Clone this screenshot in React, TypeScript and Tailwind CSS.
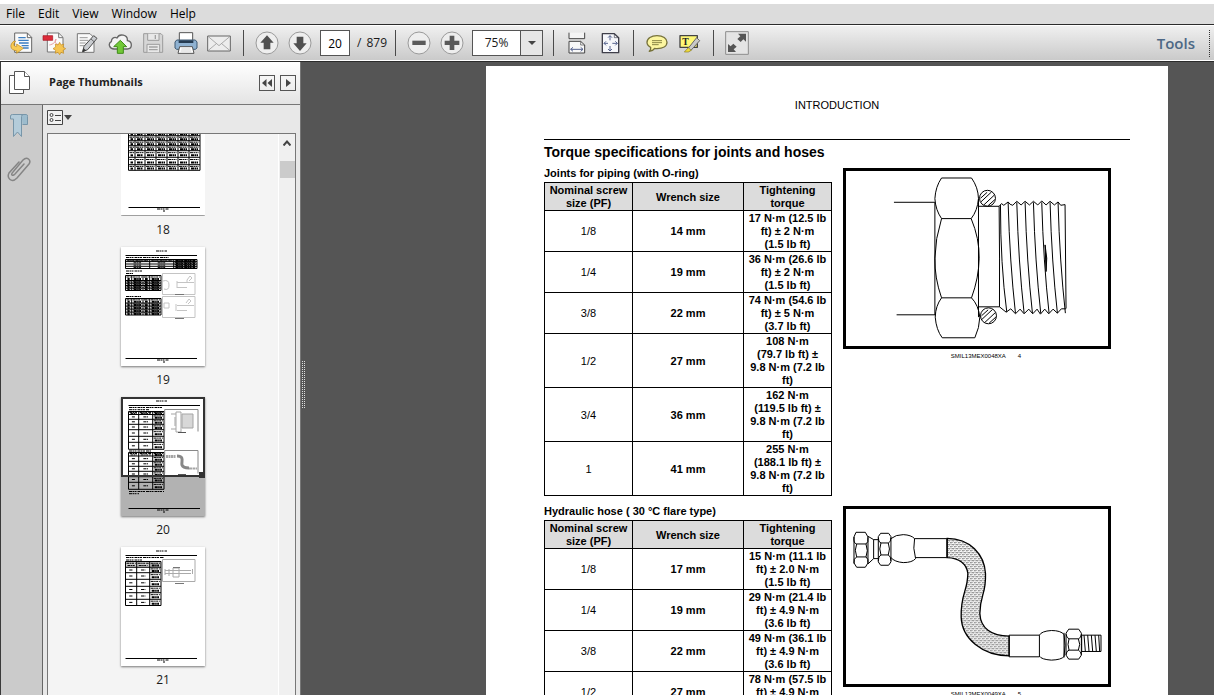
import type { ReactNode } from "react";

type SpecRow = { screw: string; wrench: string; torque: string };

const PIPING: SpecRow[] = [
  { screw: "1/8", wrench: "14 mm", torque: "17 N·m (12.5 lb\nft) ± 2 N·m\n(1.5 lb ft)" },
  { screw: "1/4", wrench: "19 mm", torque: "36 N·m (26.6 lb\nft) ± 2 N·m\n(1.5 lb ft)" },
  { screw: "3/8", wrench: "22 mm", torque: "74 N·m (54.6 lb\nft) ± 5 N·m\n(3.7 lb ft)" },
  { screw: "1/2", wrench: "27 mm", torque: "108 N·m\n(79.7 lb ft) ±\n9.8 N·m (7.2 lb\nft)" },
  { screw: "3/4", wrench: "36 mm", torque: "162 N·m\n(119.5 lb ft) ±\n9.8 N·m (7.2 lb\nft)" },
  { screw: "1", wrench: "41 mm", torque: "255 N·m\n(188.1 lb ft) ±\n9.8 N·m (7.2 lb\nft)" },
];

const HOSE: SpecRow[] = [
  { screw: "1/8", wrench: "17 mm", torque: "15 N·m (11.1 lb\nft) ± 2.0 N·m\n(1.5 lb ft)" },
  { screw: "1/4", wrench: "19 mm", torque: "29 N·m (21.4 lb\nft) ± 4.9 N·m\n(3.6 lb ft)" },
  { screw: "3/8", wrench: "22 mm", torque: "49 N·m (36.1 lb\nft) ± 4.9 N·m\n(3.6 lb ft)" },
  { screw: "1/2", wrench: "27 mm", torque: "78 N·m (57.5 lb\nft) ± 4.9 N·m\n(3.6 lb ft)" },
];

function ToolButton({ label, children }: { label: string; children: ReactNode }) {
  return (
    <button type="button" aria-label={label} className="flex h-8 w-[33px] shrink-0 items-center justify-center">
      <svg viewBox="0 0 72 72" width="24" height="24" fill="none" strokeLinejoin="round" aria-hidden="true">
        {children}
      </svg>
    </button>
  );
}

function Separator() {
  return <div className="mr-[6px] ml-[7px] h-[26px] w-px shrink-0 bg-[#4a4a4a]" />;
}

function RoundFace() {
  return <circle cx="36" cy="36" r="33" fill="#eeeeee" stroke="#9a9a9a" strokeWidth="3" />;
}

function Toolbar() {
  return (
    <div
      role="toolbar"
      className="flex h-[38px] shrink-0 items-center border-y border-[#2b2b2b] bg-linear-to-b from-[#f1f1f1] to-[#c9c9c9] pl-1 shadow-[inset_0_-1px_0_#ffffff,inset_0_1px_0_#ffffff]"
    >
      <ToolButton label="Export file">
        <path d="M17 6h38l13 13v45H17z" fill="#fafafa" stroke="#666" strokeWidth="3" />
        <path d="M55 6v14h13" stroke="#666" strokeWidth="3" />
        <path d="M28 20h22M28 28h31M30 36h29M38 44h21M42 51h17" stroke="#3b7ec2" strokeWidth="4" />
        <path d="M15 30c-14 10-13 28 8 29v8l20-15-20-13v8c-10 0-11-10-3-16z" fill="#f8cb55" stroke="#b98619" strokeWidth="2" />
      </ToolButton>
      <ToolButton label="Create PDF">
        <path d="M16 6h34l13 13v44H16z" fill="#fafafa" stroke="#777" strokeWidth="3" />
        <path d="M50 6v14h13" stroke="#777" strokeWidth="3" />
        <path d="M22 42c12-2 20-10 20-18-6 8 0 16 10 18" stroke="#e8a0a4" strokeWidth="3" />
        <rect x="3" y="14" width="29" height="14" fill="#dc2b3a" stroke="#a31521" strokeWidth="2" />
        <path d="m53 34 4 8 8-3-2 9 8 5-8 5 2 9-8-3-4 7-5-7-8 3 1-9-8-5 8-5-1-9 8 3z" fill="#f5c451" stroke="#c28b1e" strokeWidth="2" />
      </ToolButton>
      <ToolButton label="Edit text">
        <path d="M7 8h38l12 12v44H7z" fill="#fafafa" stroke="#777" strokeWidth="3" />
        <path d="M14 20h24M14 28h26M14 36h18M14 44h14" stroke="#999" strokeWidth="3" />
        <path d="m56 14 10 8-28 34-15 6 4-16z" fill="#c9ccd0" stroke="#4c4c4c" strokeWidth="3" />
        <path d="m48 24 9 8M23 62l3-9 6 5z" fill="#333" stroke="#333" strokeWidth="2" />
      </ToolButton>
      <ToolButton label="Upload to cloud">
        <path d="M18 54C4 54-1 38 10 32c0-11 10-16 17-11 7-15 33-10 31 8 16 2 16 25 0 25z" fill="#f4f4f4" stroke="#666" strokeWidth="4" />
        <path d="M37 28 56 47H46v20H28V47H17z" fill="#71c837" stroke="#3f8b1a" strokeWidth="3" />
      </ToolButton>
      <ToolButton label="Save">
        <path d="M8 8h52l5 5v51H8z" fill="#d6d6d6" stroke="#9c9c9c" strokeWidth="3" />
        <path d="M20 8v20h34V8M18 64V40h38v24" fill="#e8e8e8" stroke="#9c9c9c" strokeWidth="3" />
        <path d="M43 12v12M24 48h26M24 56h26" stroke="#a2a2a2" strokeWidth="4" />
      </ToolButton>
      <ToolButton label="Print">
        <path d="M16 5h40v25H16z" fill="#fff" stroke="#555" strokeWidth="3" />
        <path d="M8 27h56l5 6v18l-5 4H8l-5-4V33z" fill="#8fb2d2" stroke="#3c5873" strokeWidth="3" />
        <path d="M14 28h44v8H14z" fill="#263c52" />
        <path d="M17 47h38l5 20H12z" fill="#fff" stroke="#555" strokeWidth="3" />
        <path d="M22 54h28M20 60h32" stroke="#bbb" strokeWidth="2" />
      </ToolButton>
      <ToolButton label="Send by email">
        <path d="M2 15h68v45H2z" fill="#ededed" stroke="#666" strokeWidth="3" />
        <path d="m4 17 32 27 32-27M4 58l24-20M68 58 44 38" stroke="#8a8a8a" strokeWidth="2" />
      </ToolButton>
      <div className="w-px" />
      <Separator />
      <ToolButton label="Previous page">
        <RoundFace />
        <path d="m36 13 20 22H46v20H26V35H16z" fill="#505050" />
      </ToolButton>
      <ToolButton label="Next page">
        <RoundFace />
        <path d="m36 60 20-23H46V17H26v20H16z" fill="#505050" />
      </ToolButton>
      <input
        type="text"
        aria-label="Page number"
        defaultValue="20"
        className="ml-1 h-[26px] w-[30px] shrink-0 border border-[#555] bg-white text-center text-xs text-black"
      />
      <span className="ml-[7px] flex w-[31px] shrink-0 gap-[5px] text-xs">
        <span>/</span>
        <span>879</span>
      </span>
      <Separator />
      <ToolButton label="Zoom out">
        <RoundFace />
        <path d="M16 29h40v13H16z" fill="#5a5a5a" />
      </ToolButton>
      <ToolButton label="Zoom in">
        <RoundFace />
        <path d="M29 14h14v15h15v13H43v15H29V42H14V29h15z" fill="#5a5a5a" />
      </ToolButton>
      <div className="mr-[3px] ml-1 flex h-[26px] w-[71px] shrink-0 items-stretch border border-[#555] bg-white">
        <select aria-label="Zoom" defaultValue="75%" className="w-12 appearance-none border-r border-[#555] text-center text-xs">
          <option>50%</option>
          <option>75%</option>
          <option>100%</option>
        </select>
        <span className="flex flex-1 items-center justify-center bg-[#e6e6e6]">
          <svg viewBox="0 0 8 4" width="8" height="4" aria-hidden="true">
            <path d="M0 0h8L4 4z" fill="#444" />
          </svg>
        </span>
      </div>
      <Separator />
      <ToolButton label="Fit width">
        <path d="M12 5v18h47V5" fill="#f4f4f4" stroke="#444" strokeWidth="3" />
        <path d="M12 66V31h35l12 11v24z" fill="#f8f8f8" stroke="#444" strokeWidth="3" />
        <path d="M47 31v11h12" stroke="#444" strokeWidth="2" />
        <path d="M17 55h37m-30-6-7 6 7 6m23-12 7 6-7 6" stroke="#56638f" strokeWidth="3" />
      </ToolButton>
      <ToolButton label="Fit page">
        <path d="M13 8h36l13 12v45H13z" fill="#f6f7fb" stroke="#3f3f4a" strokeWidth="4" />
        <path d="M49 8v12h13" stroke="#3f3f4a" strokeWidth="2" />
        <path d="M36 14v14M36 60V45M18 37h12M58 37H43m-7-23-6 6m6-6 6 6M36 60l-6-6m6 6 6-6M18 37l6-6m-6 6 6 6M58 37l-6-6m6 6-6 6" stroke="#56638f" strokeWidth="3" />
      </ToolButton>
      <Separator />
      <ToolButton label="Add comment">
        <path d="M36 14c18 0 30 8 30 20S53 53 36 53c-3 0-5 0-7-1-3 5-9 8-16 9 4-4 5-8 4-12C10 46 6 40 6 34c0-12 13-20 30-20z" fill="#fcf6a0" stroke="#77733c" strokeWidth="4" />
        <path d="M21 29h30M21 35h30M21 41h20" stroke="#8a8543" strokeWidth="3" />
      </ToolButton>
      <ToolButton label="Highlight text">
        <path d="M6 14h52v35H6z" fill="#fff876" stroke="#444" strokeWidth="4" />
        <text x="13" y="41" fontSize="29" fontWeight="bold" fontFamily="Liberation Serif, serif" fill="#222">
          T
        </text>
        <path d="m56 20 9 9-26 29-11 3 4-11z" fill="#c9c9c9" stroke="#666" strokeWidth="3" />
        <path d="m31 50 9 8-9 5H19z" fill="#f0dc3c" stroke="#8a7b22" strokeWidth="2" />
      </ToolButton>
      <Separator />
      <ToolButton label="Read mode">
        <path d="M2 2h68v68H2z" fill="#e4e4e4" stroke="#8d8d8d" strokeWidth="3" />
        <path d="M63 8v24l-8-7-8 8-10-9 9-8-7-8zM9 63V39l8 7 8-8 10 9-9 8 7 8z" fill="#555" />
      </ToolButton>
      <div className="flex-1" />
      <button type="button" className="mr-[14px] text-[15px] font-semibold text-[#4d6885]">
        Tools
      </button>
      <div className="mr-1 h-[27px] border-l border-dotted border-[#333]" />
    </div>
  );
}

/* Row of dark specks standing in for text on a miniature page */
function Specks({ x1, x2, y, heavy = false }: { x1: number; x2: number; y: number; heavy?: boolean }) {
  return (
    <line x1={x1} x2={x2} y1={y} y2={y} stroke="#000" strokeWidth={heavy ? 2 : 1} strokeDasharray="3 0.5 1.5 0.5 2 1" />
  );
}

function MiniTable({ cols, rows, dense = false }: { cols: number[]; rows: number[]; dense?: boolean }) {
  const left = cols[0];
  const right = cols[cols.length - 1];
  const bottom = rows[rows.length - 1];
  return (
    <g>
      {rows.map((y) => (
        <line key={`r${y}`} x1={left} x2={right} y1={y} y2={y} stroke="#000" />
      ))}
      {cols.map((x) => (
        <line key={`c${x}`} x1={x} x2={x} y1={rows[0]} y2={bottom} stroke="#000" />
      ))}
      {rows.slice(1).map((y, r) =>
        cols.slice(1).map((x, c) => {
          const height = y - rows[r];
          const width = x - cols[c];
          const mid = (y + rows[r]) / 2;
          const last = c === cols.length - 2;
          if (dense || last || r === 0) {
            return (
              <g key={`${x}-${y}`}>
                <Specks x1={cols[c] + 1} x2={x - 1} y={mid - height / 5} />
                <Specks x1={cols[c] + 2} x2={x - 2} y={mid + height / 5} heavy={dense || last} />
              </g>
            );
          }
          return <Specks key={`${x}-${y}`} x1={cols[c] + width / 3} x2={x - width / 3} y={mid} />;
        }),
      )}
    </g>
  );
}

function MiniFrame({ left, children }: { left: number; children: ReactNode }) {
  return (
    <svg viewBox="0 0 84 119" width="84" height="119" className="shrink-0 bg-white shadow-[0_1px_2px_#777]" aria-hidden="true">
      <Specks x1={35} x2={46} y={4} />
      <path d={`M${left} 8.5h71.5M${left} 111.5h71.5`} stroke="#000" />
      <Specks x1={36} x2={48} y={113} />
      <Specks x1={42} x2={44} y={115} />
      {children}
    </svg>
  );
}

function Thumb18() {
  return (
    <MiniFrame left={7.5}>
      <MiniTable dense cols={[7.5, 14, 24, 35, 46, 57, 68, 79]} rows={[30, 35, 39.7, 44.7, 49.7, 54.7, 61.3, 68.7, 74.3]} />
    </MiniFrame>
  );
}

function Thumb19() {
  return (
    <MiniFrame left={4.5}>
      <Specks x1={5} x2={48} y={10.5} />
      <MiniTable cols={[4.5, 28.7, 52.7, 76]} rows={[12.5, 14.6, 17, 19.3, 21.5]} />
      <Specks x1={5} x2={22} y={24} />
      <Specks x1={5} x2={12} y={26.5} />
      <MiniTable dense cols={[4.5, 10.7, 22, 28.7, 40]} rows={[28.5, 33.5, 36, 38.5, 41, 43.5]} />
      <Specks x1={5} x2={20} y={49.5} />
      <MiniTable dense cols={[4.5, 10.7, 22, 28.7, 40]} rows={[51.5, 56, 59, 62, 65, 68]} />
      <g stroke="#c4c4c4" fill="none">
        <path d="M41.5 26.5H74v21H41.5zM41.5 49.5H74v21H41.5z" />
        <path d="M42 34q6-2 6 4t-5 4M56 34v7M56 35.5h17M56 40.5h10M66 35v-2l3-4 2 2-3 3M43 56h5v5h-5zM55 57v7M56 58.5h17M56 63.5h10M65 56l3-4 2 2-3 3" />
        <path d="M54 47.5h9M54 71.5h9" stroke="#777" />
      </g>
    </MiniFrame>
  );
}

function Thumb20() {
  return (
    <MiniFrame left={7.5}>
      <Specks x1={8} x2={42} y={10.5} />
      <Specks x1={8} x2={28} y={12.7} />
      <MiniTable cols={[7.5, 17.7, 31.7, 43]} rows={[14.5, 17.5, 22.3, 27.3, 32.7, 39.3, 45.3, 52.3]} />
      <Specks x1={8} x2={30} y={54} />
      <MiniTable cols={[7.5, 17.7, 31.7, 43]} rows={[55.5, 59, 64.3, 69.3, 74.3, 79.7, 85.3, 92.3]} />
      <Specks x1={8} x2={43} y={94.5} />
      <Specks x1={8} x2={18} y={96.7} />
      <g stroke="#a5a5a5" fill="none">
        <path d="M43.7 12.5H77v22M43.7 12.5v22M43.7 53.5H77v23M43.7 53.5v23" stroke="#888" />
        <path d="M55 15h5v20h-5zM54 20v9M50 17h5M50 32h5" />
        <path d="M61 17h11v14H61z" fill="#d8d8d8" />
        <path d="M45 59.5h10" strokeWidth="3" strokeDasharray="2 0.5" />
        <path d="M56 59c8 0 4 6 5 9s4 3 7 3" stroke="#888" strokeWidth="3" />
        <path d="M68 71.5h8" strokeWidth="2" strokeDasharray="3 0.5" />
        <path d="M57 35.5h8M57 77.5h8" stroke="#555" />
      </g>
      <path d="M0 79h84v40H0z" fill="#000" fillOpacity="0.3" />
      <path d="M1 1h82v78H1z" fill="none" stroke="#333" strokeWidth="2" />
      <path d="M78 75h6v6h-6z" fill="#333" />
    </MiniFrame>
  );
}

function Thumb21() {
  return (
    <MiniFrame left={4.5}>
      <Specks x1={5} x2={43} y={10.5} />
      <Specks x1={5} x2={21} y={13} />
      <path d="M5 15h35v5H5z" fill="#ccc" />
      <MiniTable cols={[4.5, 15.7, 28.7, 40]} rows={[14.5, 20.3, 25.7, 32.3, 39.3, 45.7, 52.3, 58.5]} />
      <g stroke="#aaa" fill="none">
        <path d="M41.5 12.5H74v22H41.5z" />
        <path d="M44 23.5h26M44 26.5h26M44 22v6M71.5 22v5M48 22v7M52 21h6v9h-6z" />
        <path d="M52 20.5h7M54 36.5h9" stroke="#777" />
      </g>
    </MiniFrame>
  );
}

function ThumbItem({ page, children }: { page: number; children: ReactNode }) {
  return (
    <li>
      <a href={`#page-${page}`} className="flex flex-col items-center">
        {children}
        <span className="flex h-[31px] items-center pb-[3px] text-xs">{page}</span>
      </a>
    </li>
  );
}

function Sidebar() {
  return (
    <aside className="flex w-[301px] shrink-0 flex-col border-r border-l border-r-[#777] border-l-[#3a3a3a] bg-[#e8e8e8]">
      <header className="flex h-[43px] shrink-0 items-center border-b border-[#777] bg-linear-to-b from-white to-[#e4e4e4] pb-px">
        <svg viewBox="0 0 22 24" width="22" height="24" className="ml-2" fill="#fff" stroke="#555" aria-hidden="true">
          <path d="M.5 4.5h14v18H.5z" />
          <path d="M5.500.5h10l5 5v13h-15z" />
          <path d="M15.500.5v5h5" />
        </svg>
        <h2 className="ml-[18px] flex-1 text-[11px] font-bold text-[#222]">Page Thumbnails</h2>
        <button type="button" aria-label="Collapse panel" className="flex size-4 items-center justify-center border border-[#555]">
          <svg viewBox="0 0 10 8" width="10" height="8" fill="#444" aria-hidden="true">
            <path d="M4.500 0v8L0 4zM10 0v8L5.500 4z" />
          </svg>
        </button>
        <button type="button" aria-label="Expand panel" className="mr-1 ml-[5px] flex size-4 items-center justify-center border border-[#555]">
          <svg viewBox="0 0 5 8" width="5" height="8" fill="#444" aria-hidden="true">
            <path d="M0 0v8l5-4z" />
          </svg>
        </button>
      </header>
      <div className="flex min-h-0 flex-1">
        <nav className="flex w-[42px] shrink-0 flex-col items-center gap-[19px] border-r border-[#666] bg-[#cbcbcb] pt-2 pr-1.5">
          <button type="button" aria-label="Bookmarks">
            <svg viewBox="0 0 18 24" width="18" height="24" fill="#b4ccda" stroke="#7896a9" aria-hidden="true">
              <path d="M11.500 1.500h5q1 0 1 2v8h-5" fill="#9dbccd" />
              <path d="M.5 5V3q0-1.500 2-1.500h11q-2 0-2 2v20l-4-4.500-4 4.500V6H.5z" />
            </svg>
          </button>
          <button type="button" aria-label="Attachments">
            <svg viewBox="0 0 24 26" width="24" height="26" fill="none" stroke="#858585" strokeWidth="1.5" strokeLinecap="round" aria-hidden="true">
              <path d="M17 8 8 18q-2 2-3 1t1-3L16 4q3-3 5.500-1T22 8L10 22q-4 4-7 1.500T2 17L12 6" />
            </svg>
          </button>
        </nav>
        <div className="flex min-w-0 flex-1 flex-col px-1">
          <button type="button" aria-label="Thumbnail options" className="flex h-7 shrink-0 items-center gap-px pb-[3px]">
            <svg viewBox="0 0 16 15" width="16" height="15" fill="#f2f2f2" stroke="#444" aria-hidden="true">
              <path d="M.5.5h15v14H.5z" />
              <circle cx="4.500" cy="5" r="1.500" />
              <circle cx="4.500" cy="10" r="1.500" />
              <path d="M8 5.500h6M8 10.500h6" />
            </svg>
            <svg viewBox="0 0 8 5" width="8" height="5" aria-hidden="true">
              <path d="M0 0h8L4 5z" fill="#444" />
            </svg>
          </button>
          <div className="flex min-h-0 flex-1 border border-b-0 border-[#777] bg-[#f4f4f4]">
            <ul className="flex min-w-0 flex-1 flex-col overflow-hidden">
              <ThumbItem page={18}>
                {/* scrolled half out of view */}
                <div className="flex h-[82px] items-end overflow-hidden pb-px">
                  <Thumb18 />
                </div>
              </ThumbItem>
              <ThumbItem page={19}>
                <Thumb19 />
              </ThumbItem>
              <ThumbItem page={20}>
                <Thumb20 />
              </ThumbItem>
              <ThumbItem page={21}>
                <Thumb21 />
              </ThumbItem>
            </ul>
            <div className="flex w-[17px] shrink-0 flex-col items-center border-l border-white bg-[#f0f0f0]">
              <svg viewBox="0 0 8 6" width="8" height="6" fill="none" stroke="#444" strokeWidth="2" className="mt-1.5 shrink-0" aria-hidden="true">
                <path d="m.5 5.500 3.500-4 3.500 4" />
              </svg>
              <div className="mt-[15px] h-[17px] w-[15px] shrink-0 bg-[#cbcbcb]" />
            </div>
          </div>
        </div>
      </div>
    </aside>
  );
}

function SpecTable({ title, rows }: { title: string; rows: SpecRow[] }) {
  return (
    <table className="w-72 table-fixed border-collapse text-center text-[11px] leading-[13px]">
      <caption className="h-[14px] text-left text-[11px] leading-[11px] font-bold whitespace-nowrap">{title}</caption>
      <colgroup>
        <col className="w-[88px]" />
        <col className="w-[111px]" />
        <col />
      </colgroup>
      <thead>
        <tr className="bg-[#dcdcdc]">
          <th className="border border-black p-0 pt-px whitespace-pre">{"Nominal screw\nsize (PF)"}</th>
          <th className="border border-black p-0 pt-px">Wrench size</th>
          <th className="border border-black p-0 pt-px whitespace-pre">{"Tightening\ntorque"}</th>
        </tr>
      </thead>
      <tbody>
        {rows.map((row) => (
          <tr key={row.screw}>
            <td className="border border-black p-0 pt-px">{row.screw}</td>
            <td className="border border-black p-0 pt-px font-bold">{row.wrench}</td>
            <td className="border border-black p-0 pt-px font-bold whitespace-pre">{row.torque}</td>
          </tr>
        ))}
      </tbody>
    </table>
  );
}

function Figure({ code, number, viewBox, children }: { code: string; number: number; viewBox: string; children: ReactNode }) {
  return (
    <figure className="w-[268px]">
      <div className="border-3 border-black">
        <svg viewBox={viewBox} className="block h-auto w-full" fill="none" stroke="#000" strokeWidth="3" aria-hidden="true">
          {children}
        </svg>
      </div>
      <figcaption className="flex justify-center gap-3 pl-[18px] text-[6px] leading-[14px]">
        <span>{code}</span>
        <span>{number}</span>
      </figcaption>
    </figure>
  );
}

const CRESTS = [520, 546, 571, 596, 621, 646, 670];

function FittingDrawing() {
  return (
    <>
      <path d="M177 127h123M185 465h117M300 127v338" />
      <path d="M320 54h90q20 28 21 62-3 36-22 60h-89q-18-26-20-60 2-36 20-62z" />
      <path d="M320 176q-19 60-20 119t20 119h90q22-60 23-119t-24-119" />
      <path d="M320 414q-18 24-19 58 3 38 21 62h98q14-30 15-62-4-36-25-58" />
      <path d="M431 116v356M431 139h62M431 441h63M493 139q2 160 1 302" />
      <path d="m493 139 7-8 7 5 13-10 6 7 8 3 12-12 13 11 12-11 13 11 12-11 13 11 12-12 13 12 12-11 13 11 11-9 8 10 13-2 3 312" strokeLinejoin="round" />
      <path d="m494 441 20 16 14-10 14 15 14-14 12 14 14-14 12 14 13-14 10 15 13-15 12 14 13-14 13 12 12-13h14" strokeLinejoin="round" />
      {CRESTS.map((x) => (
        <path key={x} d={`M${x} 127q5 180 22 333`} />
      ))}
      <path d="M497 135q0 180 19 322" />
      <path d="M631 255l5 40-2 40z" fill="#000" />
      <circle cx="458" cy="115" r="24" />
      <path d="m437 115 20-18M438 126l32-30M447 135l32-30M460 137l20-18" />
      <circle cx="461" cy="468" r="24" />
      <path d="m440 468 20-18M441 479l32-30M450 488l32-30M463 490l20-18" />
    </>
  );
}

function HoseDrawing() {
  return (
    <>
      <defs>
        <pattern id="braid" width="12" height="12" patternUnits="userSpaceOnUse">
          <path d="m1 2 4 4M11 2 7 6M1 10h4M8 8l3 3" stroke="#000" strokeWidth="2" />
        </pattern>
      </defs>
      <path d="M63 112h28l8 14v78l-8 13H65l-8-13v-78zM57 126q-2 20 8 21h28q8-4 6-20M65 147q-8 18 0 39h28q8-18 0-39M65 186q-10 4-8 20M93 186q8 6 6 18" />
      <path d="m99 124 17 10h14M99 207l17-16h14M116 134v57" />
      <path d="M137 115h24l7 10v76l-7 10h-24l-7-10v-76zM130 128q0 14 8 16h22q8-2 8-16M138 144q-7 18 0 36h22q7-18 0-36M138 180q-8 4-8 18M160 180q8 4 8 18" />
      <path d="M168 131q14-12 37-12 24 1 34 12-6 28 3 60-10 12-37 12-26-2-37-15M239 131h97v57h-94" />
      <path d="M337 130c68 0 112 48 115 106 2 66-16 60-17 120 2 44 34 68 88 68v59c-80 0-142-52-144-116-2-72 20-78 20-132-4-28-26-46-62-47z" fill="url(#braid)" strokeWidth="4" />
      <path d="M523 421h91v65h-91zM614 421q6-12 36-14 28 0 38 12 6 32 0 66-8 10-38 11-30-2-36-12M688 414v74" />
      <path d="M702 403h30l8 12v66l-8 12h-30l-8-12v-66zM694 418q2 12 9 14h28q8-2 9-14M703 432q-6 16 0 34h28q8-18 0-34M703 466q-8 2-9 14M731 466q8 4 9 14" />
      <path d="M741 421h58v49h-58zM748 421l4 49M759 421l4 49M770 421l4 49M781 421l4 49M792 421l3 49" />
    </>
  );
}

export default function App() {
  return (
    <div className="flex h-screen flex-col overflow-hidden bg-white pt-1 font-['Open_Sans','Noto_Sans',sans-serif] text-[#1a1a1a]">
      <nav className="flex h-5 shrink-0 items-center gap-[13px] bg-[#dcdcdc] pl-1.5 text-xs text-black">
        <button type="button">File</button>
        <button type="button">Edit</button>
        <button type="button">View</button>
        <button type="button">Window</button>
        <button type="button">Help</button>
      </nav>
      <Toolbar />
      <div className="flex min-h-0 flex-1 bg-[#555]">
        <Sidebar />
        <div className="flex w-[5px] shrink-0 items-center pt-3">
          <svg viewBox="0 0 4 48" width="4" height="48" className="ml-px" aria-hidden="true">
            <path d="M.5 0v48M2.500 0v48" stroke="#ddd" strokeDasharray="1 1" />
          </svg>
        </div>
        <main className="flex min-w-0 flex-1 justify-end overflow-hidden pt-1 pr-[46px]">
          <article className="min-h-full w-[682px] shrink-0 bg-white pt-[31px] pr-[38px] pl-[58px] font-['Liberation_Sans',Arial,sans-serif] text-black">
            <p className="border-b border-black pb-[26px] text-center text-[11px] leading-4">INTRODUCTION</p>
            <h1 className="mb-1 text-sm leading-6 font-bold">Torque specifications for joints and hoses</h1>
            <section className="mb-[10px] flex items-start gap-[11px]">
              <SpecTable title="Joints for piping (with O-ring)" rows={PIPING} />
              <Figure code="SMIL13MEX0048XA" number={4} viewBox="33 33 787 525">
                <FittingDrawing />
              </Figure>
            </section>
            <section className="flex items-start gap-[11px]">
              <SpecTable title="Hydraulic hose ( 30 °C flare type)" rows={HOSE} />
              <Figure code="SMIL13MEX0049XA" number={5} viewBox="33 42 787 525">
                <HoseDrawing />
              </Figure>
            </section>
          </article>
        </main>
      </div>
    </div>
  );
}
